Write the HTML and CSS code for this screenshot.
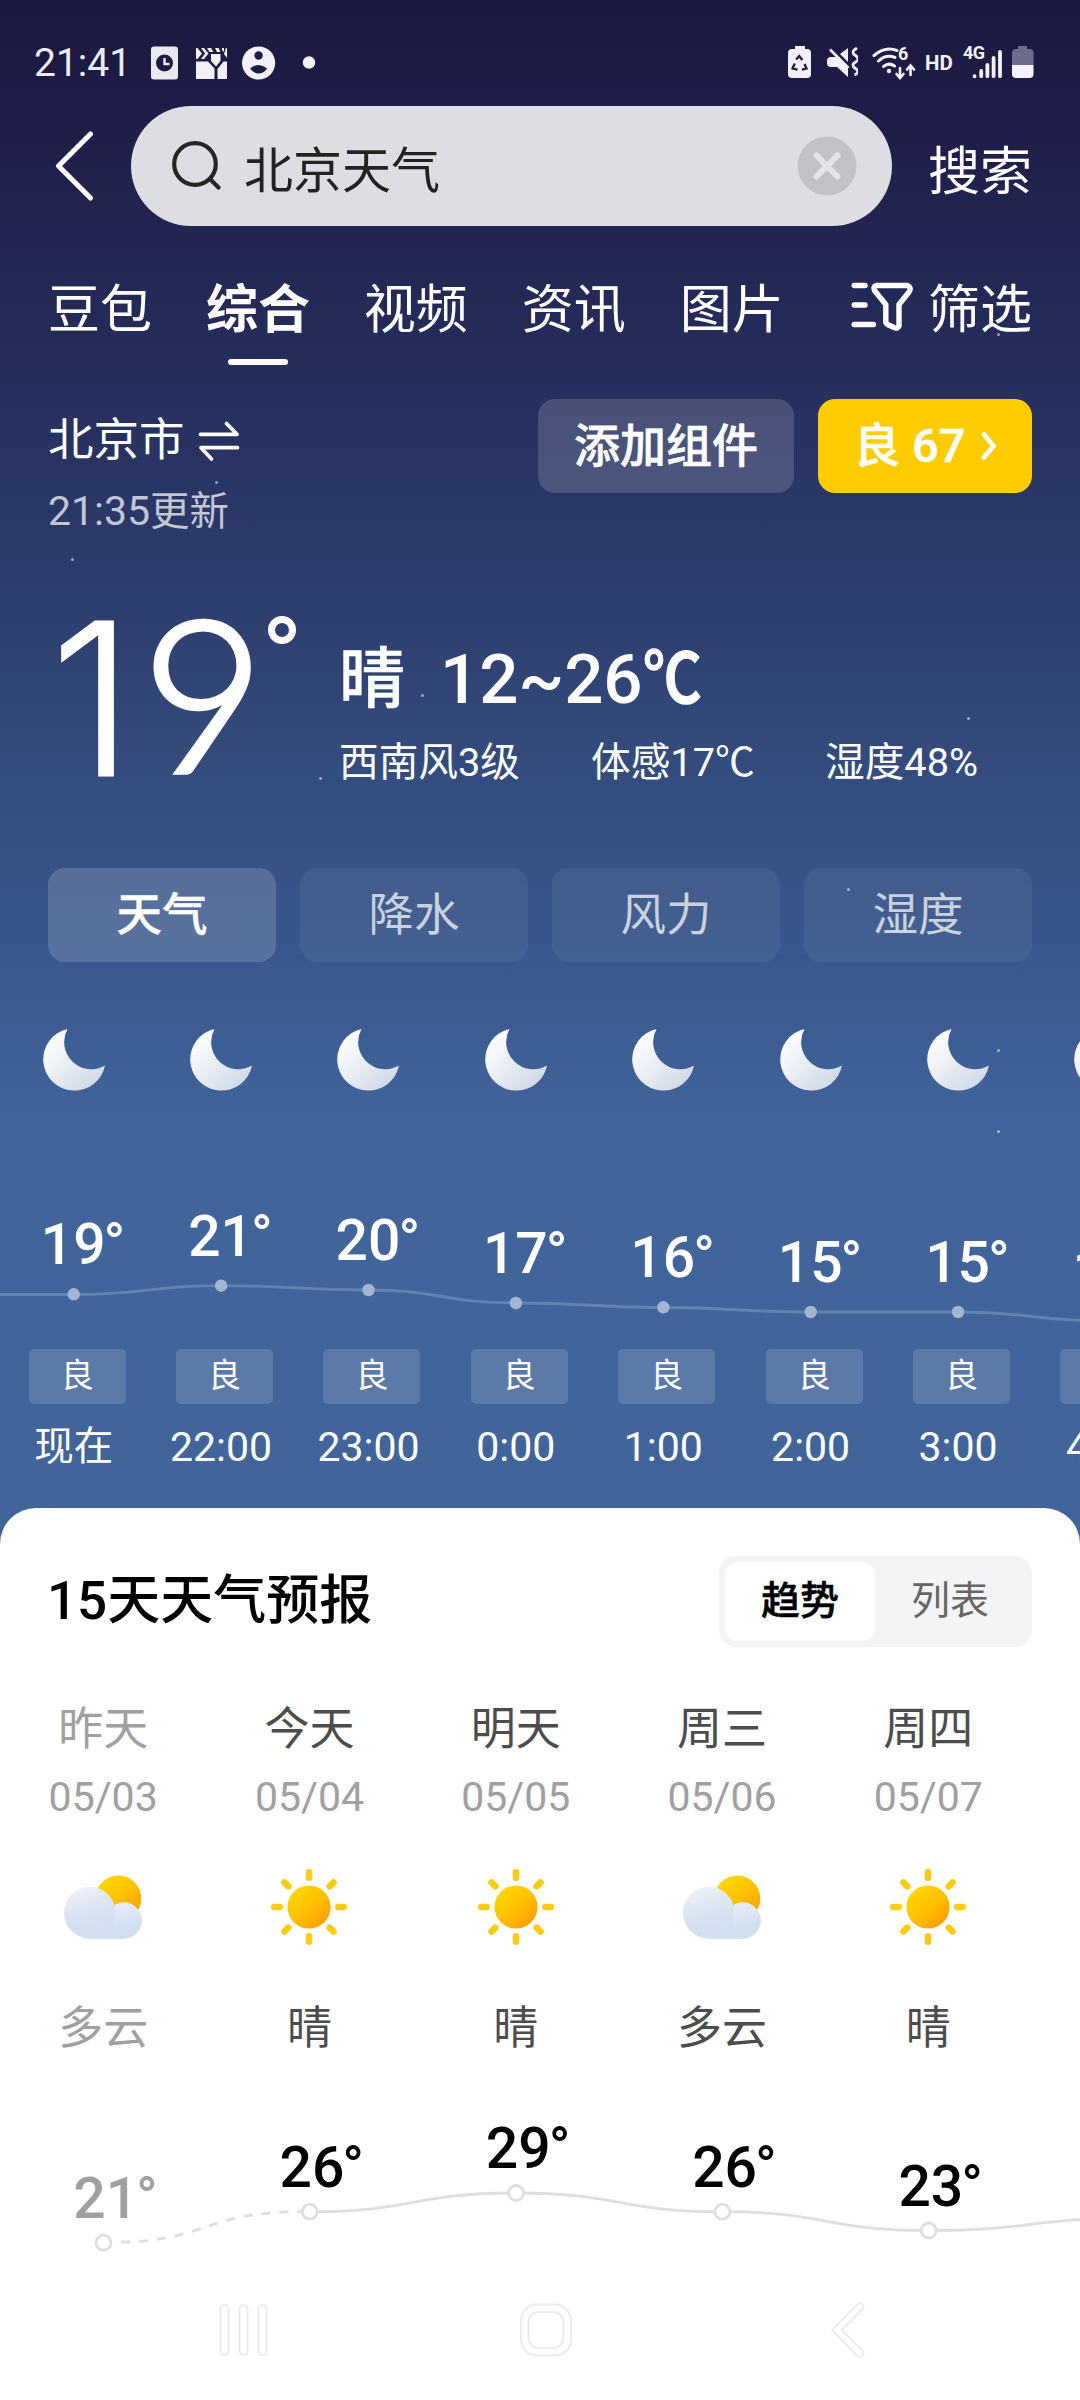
FILE: index.html
```html
<!DOCTYPE html>
<html lang="zh-CN">
<head>
<meta charset="utf-8">
<title>北京天气</title>
<link rel="stylesheet" href="styles.css">
</head>
<body>
<svg class="defs" width="0" height="0" aria-hidden="true">
  <defs>
    <linearGradient id="moonFill" x1="0.1" y1="0.1" x2="0.9" y2="0.9">
      <stop offset="0" stop-color="#ffffff"/>
      <stop offset="1" stop-color="#cfd8e6"/>
    </linearGradient>
    <linearGradient id="sunFill" x1="0.15" y1="0.1" x2="0.85" y2="0.95">
      <stop offset="0" stop-color="#ffd800"/>
      <stop offset="0.5" stop-color="#ffc000"/>
      <stop offset="1" stop-color="#ff9c00"/>
    </linearGradient>
    <linearGradient id="cloudFill" x1="0.2" y1="0" x2="0.5" y2="1">
      <stop offset="0" stop-color="#eef1f9"/>
      <stop offset="0.6" stop-color="#d6e1f1"/>
      <stop offset="1" stop-color="#d2dff0"/>
    </linearGradient>
    <linearGradient id="puffFill" x1="0.3" y1="0" x2="0.5" y2="1">
      <stop offset="0" stop-color="#e9eef7"/>
      <stop offset="0.7" stop-color="#d2dff0"/>
    </linearGradient>
    <symbol id="moon" viewBox="0 0 64 64">
      <path fill="url(#moonFill)" d="M25.5 1 A31.2 31.2 0 1 0 63 37.6 A27.2 27.2 0 0 1 25.5 1Z"/>
    </symbol>
    <symbol id="sun" viewBox="0 0 80 80">
      <g stroke="#fccb12" stroke-width="6.6" stroke-linecap="round">
        <path d="M40 5.3v5.4M40 69.3v5.4M5.3 40h5.4M69.3 40h5.4M15.5 15.5l3.8 3.8M60.7 60.7l3.8 3.8M15.5 64.5l3.8-3.8M60.7 19.3l3.8-3.8"/>
      </g>
      <circle cx="40" cy="40" r="21.6" fill="url(#sunFill)"/>
    </symbol>
    <symbol id="cloudy" viewBox="0 0 80 80">
      <circle cx="55.3" cy="31.5" r="23" fill="url(#sunFill)"/>
      <path fill="url(#cloudFill)" d="M27 19.7a26 26 0 0 0 0 52H60V45a18 18 0 0 0-7.5-1.5A26 26 0 0 0 27 19.7Z"/>
      <path fill="url(#puffFill)" d="M50 71.7h11a18.2 18.2 0 1 0-9-34.2Z"/>
    </symbol>
  </defs>
</svg>

<main class="screen">
  <div class="stars" aria-hidden="true">
    <i style="left:215px;top:481px"></i><i style="left:71px;top:558px"></i><i style="left:997px;top:333px"></i>
    <i style="left:421px;top:694px"></i><i style="left:319px;top:777px"></i><i style="left:967px;top:717px"></i>
    <i style="left:847px;top:888px"></i><i style="left:997px;top:1049px"></i><i style="left:997px;top:1130px"></i>
  </div>

  <header class="status">
    <span class="clock">21:41</span>
    <svg class="status-left" width="166" height="36" viewBox="0 0 166 36">
      <rect x="1" y="1.500" width="27" height="33" rx="3" fill="#e9e9f2"/>
      <circle cx="14.500" cy="18" r="8.500" fill="#1e1b46"/>
      <path d="M14.500 13v6h5" fill="none" stroke="#e9e9f2" stroke-width="2.400"/>
      <g fill="#f1f1f7">
        <path d="M46 3h1.500l4.500 5.500-4.500 5.500H46ZM51 3h3l4.500 5.500L54 14h-3l4-5.500ZM57 3h4l2.500 4h-4ZM65 3h3.500l2 4H67ZM72 3h2v4l-2-2ZM76 3h1v10l-3-4Z"/>
        <path d="M61 9h9.500v7L66 21.500 61 16ZM46 16.500h12l6.500 7V34H46ZM77 16.500V34h-9.500V24l6-7.500Z"/>
        <circle cx="108.600" cy="18" r="16.600"/>
        <circle cx="159" cy="17.500" r="6.200"/>
      </g>
      <circle cx="108.600" cy="10.500" r="4.200" fill="#1e1b46"/>
      <path d="M100 23.500q8.600-7 17.200 0-3.500 5-8.600 5t-8.600-5Z" fill="#1e1b46"/>
    </svg>
    <div class="status-right">
      <svg class="ico-saver" width="23" height="34" viewBox="0 0 23 34">
        <path fill="#f1f1f7" d="M7 1h10v3h2q4 0 4 4v21q0 4-4 4H4q-4 0-4-4V8q0-4 4-4h3Z"/>
        <path d="M8.200 14.500 11.200 11l3.200 4M16.500 19l2 4.500-4.500 1.200M9.500 24.700 4.500 23.500 6.800 18.500" fill="none" stroke="#1e1b46" stroke-width="2.300"/>
      </svg>
      <svg class="ico-mute" width="31" height="30" viewBox="0 0 31 30">
        <path fill="#f1f1f7" d="M0 14q0-4 4-4l5 0L21 21v9L10 20H4q-4 0-4-4ZM13 7l8-6v14Z"/>
        <path d="M3 2.500 21.500 21" stroke="#f1f1f7" stroke-width="2.600"/>
        <path d="M28.500 2q-5 3 0 6.500t0 6.500 0 6.500-1 6.500M28.500 2l1.500-1" fill="none" stroke="#f1f1f7" stroke-width="2.800"/>
      </svg>
      <div class="ico-wifi">
        <svg width="44" height="33" viewBox="0 0 44 33">
          <g fill="none" stroke="#f1f1f7" stroke-width="3" stroke-linecap="round">
            <path d="M2 8.500Q13 -1 25 3.500M6.500 14Q14 7 23 10.500M11.500 19.500Q17 15 22.500 19"/>
            <path d="M28 21v9M24.500 27l3.500 4 3.500-4M38.500 28v-9M35 22.500l3.500-4 3.500 4" stroke-width="2.600"/>
          </g>
          <circle cx="17" cy="24" r="2.200" fill="#f1f1f7"/>
        </svg>
        <b>6</b>
      </div>
      <span class="hd">HD</span>
      <div class="ico-signal">
        <svg width="39" height="34" viewBox="0 0 39 34">
          <g stroke="#f1f1f7" stroke-width="3.800" stroke-linecap="round">
            <path d="M10.600 31.200v.1M17.200 26v5.200M23.400 20v11.200M29.600 13v18.200M36 7v24.200"/>
          </g>
        </svg>
        <b>4G</b>
      </div>
      <svg class="ico-battery" width="22" height="34" viewBox="0 0 22 34">
        <path fill="#6f6d8c" d="M6 1h9v3h2.500q4 0 4 4v13H0V8q0-4 4-4h2Z"/>
        <path fill="#f4f4f8" d="M0 20h21.500v9q0 4-4 4H4q-4 0-4-4Z"/>
      </svg>
    </div>
  </header>

  <div class="search-row">
    <svg class="back" width="40" height="72" viewBox="0 0 40 72">
      <path d="M35.500 4 3.500 36l32 32" fill="none" stroke="#fff" stroke-width="5" stroke-linecap="round" stroke-linejoin="round"/>
    </svg>
    <div class="search-box">
      <svg width="52" height="52" viewBox="0 0 52 52">
        <g fill="none" stroke="#252525" stroke-width="4.200" stroke-linecap="round">
          <circle cx="24" cy="24" r="20.800"/><path d="M39.500 39.500 47.500 47.500"/>
        </g>
      </svg>
      <span class="query">北京天气</span>
      <svg width="60" height="60" viewBox="0 0 60 60">
        <circle cx="30" cy="30" r="29.500" fill="#c2c3c7"/>
        <path d="M19.500 19.500 40.500 40.500M40.500 19.500 19.500 40.500" stroke="#e4e5e9" stroke-width="6" stroke-linecap="round"/>
      </svg>
    </div>
    <span class="search-btn">搜索</span>
  </div>

  <nav class="tabs">
    <span>豆包</span><span class="on">综合</span><span>视频</span><span>资讯</span><span>图片</span>
    <div class="filter">
      <svg width="62" height="52" viewBox="0 0 62 52">
        <g fill="none" stroke="#fff" stroke-width="5.400" stroke-linecap="round" stroke-linejoin="round">
          <path d="M3.200 5.500H14M3.200 25H14M3.200 44.500H22.500"/>
          <path d="M25 5.500H56.500Q61 7.500 58 12L48 24.500V46Q46.500 49.500 43 47.500L36.500 44.500Q34.800 43.500 34.800 41.500V24.500L23.500 10.500Q22 6.500 25 5.500Z"/>
        </g>
      </svg>
      <span>筛选</span>
    </div>
  </nav>

  <section class="place">
    <div class="place-text">
      <div class="city"><span>北京市</span>
        <svg width="42" height="42" viewBox="0 0 42 42">
          <path d="M2.500 14.300H39L28.500 3.500M39.500 27.700H3L13.500 39" fill="none" stroke="#fff" stroke-width="3.700" stroke-linecap="round" stroke-linejoin="round"/>
        </svg>
      </div>
      <div class="updated"><span>21:35</span>更新</div>
    </div>
    <div class="add">添加组件</div>
    <div class="aqi"><span>良 67</span>
      <svg width="16" height="30" viewBox="0 0 16 30"><path d="M3 3.500 12.500 15 3 26.500" fill="none" stroke="#fff" stroke-width="4.600" stroke-linecap="round"/></svg>
    </div>
  </section>

  <section class="now">
    <div class="temp-now"><span class="d1">1</span><span class="d9">9</span><i class="deg"></i></div>
    <div class="now-info">
      <div class="range"><span class="sky">晴</span><span class="span-temp">12~26</span><span class="unit">℃</span></div>
      <div class="facts"><span>西南风3级</span><span>体感17℃</span><span>湿度48%</span></div>
    </div>
  </section>

  <div class="modes"><span class="on">天气</span><span>降水</span><span>风力</span><span>湿度</span></div>

  <section class="hours">
    <svg class="curve" width="1080" height="60" viewBox="0 1275 1080 60">
      <path d="M0 1294.500H73.700C147.400 1294.500 147.400 1285.700 221.100 1285.700S294.800 1290 368.500 1290 442.200 1303 515.900 1303 589.600 1307.500 663.300 1307.500 737 1312 810.700 1312H958.100C1031.800 1312 1031.800 1321 1105.500 1321" fill="none" stroke="#6283b3" stroke-width="2.800"/>
      <g fill="#a3b5d2">
        <circle cx="73.700" cy="1294.300" r="6.200"/><circle cx="221.100" cy="1285.700" r="6.200"/><circle cx="368.500" cy="1290" r="6.200"/>
        <circle cx="515.900" cy="1303" r="6.200"/><circle cx="663.300" cy="1307.300" r="6.200"/><circle cx="810.700" cy="1312" r="6.200"/><circle cx="958.100" cy="1312" r="6.200"/>
      </g>
    </svg>
    <div class="hour"><svg class="moon"><use href="#moon"/></svg><div class="plot"><b style="margin-top:124px">19<i>°</i></b></div><em>良</em><span class="zh">现在</span></div>
    <div class="hour"><svg class="moon"><use href="#moon"/></svg><div class="plot"><b style="margin-top:116px">21<i>°</i></b></div><em>良</em><span>22:00</span></div>
    <div class="hour"><svg class="moon"><use href="#moon"/></svg><div class="plot"><b style="margin-top:120px">20<i>°</i></b></div><em>良</em><span>23:00</span></div>
    <div class="hour"><svg class="moon"><use href="#moon"/></svg><div class="plot"><b style="margin-top:133px">17<i>°</i></b></div><em>良</em><span>0:00</span></div>
    <div class="hour"><svg class="moon"><use href="#moon"/></svg><div class="plot"><b style="margin-top:137px">16<i>°</i></b></div><em>良</em><span>1:00</span></div>
    <div class="hour"><svg class="moon"><use href="#moon"/></svg><div class="plot"><b style="margin-top:142px">15<i>°</i></b></div><em>良</em><span>2:00</span></div>
    <div class="hour"><svg class="moon"><use href="#moon"/></svg><div class="plot"><b style="margin-top:142px">15<i>°</i></b></div><em>良</em><span>3:00</span></div>
    <div class="hour"><svg class="moon"><use href="#moon"/></svg><div class="plot"><b style="margin-top:151px">13<i>°</i></b></div><em>良</em><span>4:00</span></div>
  </section>

  <section class="card">
    <div class="card-head">
      <h2>15天天气预报</h2>
      <div class="toggle"><span class="on">趋势</span><span>列表</span></div>
    </div>
    <div class="days">
      <svg class="curve" width="1080" height="80" viewBox="0 2180 1080 80">
        <g fill="none" stroke="#dedee1" stroke-width="2.800">
          <path stroke-dasharray="9 9" d="M121 2242C206 2241 206 2211.700 301 2211.700"/>
          <path d="M309.800 2211.700C413 2211.700 413 2193 516.100 2193S619.200 2211.700 722.400 2211.700 825.600 2230.500 928.700 2230.500 1031.900 2218 1135 2218"/>
        </g>
        <g fill="#fff" stroke="#dedee1" stroke-width="2.800">
          <circle cx="103.500" cy="2242.700" r="7.500"/><circle cx="309.800" cy="2211.700" r="7.500"/><circle cx="516.100" cy="2193" r="7.500"/><circle cx="722.400" cy="2211.700" r="7.500"/><circle cx="928.700" cy="2230.500" r="7.500"/>
        </g>
      </svg>
      <div class="day past"><span class="name">昨天</span><span class="date">05/03</span><svg class="wx"><use href="#cloudy"/></svg><span class="name">多云</span><div class="plot"><b style="margin-top:113px">21<i>°</i></b></div></div>
      <div class="day"><span class="name">今天</span><span class="date">05/04</span><svg class="wx"><use href="#sun"/></svg><span class="name">晴</span><div class="plot"><b style="margin-top:82px">26<i>°</i></b></div></div>
      <div class="day"><span class="name">明天</span><span class="date">05/05</span><svg class="wx"><use href="#sun"/></svg><span class="name">晴</span><div class="plot"><b style="margin-top:63px">29<i>°</i></b></div></div>
      <div class="day"><span class="name">周三</span><span class="date">05/06</span><svg class="wx"><use href="#cloudy"/></svg><span class="name">多云</span><div class="plot"><b style="margin-top:82px">26<i>°</i></b></div></div>
      <div class="day"><span class="name">周四</span><span class="date">05/07</span><svg class="wx"><use href="#sun"/></svg><span class="name">晴</span><div class="plot"><b style="margin-top:101px">23<i>°</i></b></div></div>
    </div>
    <footer class="sysnav">
      <svg width="50" height="56" viewBox="0 0 50 56">
        <g fill="none" stroke="#ececec" stroke-width="2">
          <rect x="1.500" y="3" width="8" height="50" rx="4"/><rect x="20.500" y="3" width="8" height="50" rx="4"/><rect x="39.500" y="3" width="8" height="50" rx="4"/>
        </g>
      </svg>
      <svg width="52" height="56" viewBox="0 0 52 56">
        <g fill="none" stroke="#ececec" stroke-width="2">
          <rect x="1" y="2.500" width="50" height="51" rx="16"/><rect x="8.500" y="10" width="35" height="36" rx="10"/>
        </g>
      </svg>
      <svg width="36" height="56" viewBox="0 0 36 56">
        <path d="M29 4.500 6 28l23 23.500" fill="none" stroke="#ececec" stroke-width="9" stroke-linecap="round"/>
        <path d="M29 4.500 6 28l23 23.500" fill="none" stroke="#fff" stroke-width="5" stroke-linecap="round"/>
      </svg>
    </footer>
  </section>
</main>
</body>
</html>
```

FILE: styles.css
```css
* { box-sizing: border-box; }
body {
  margin: 0;
  font-family: Roboto, "Noto Sans CJK SC", sans-serif;
  color: #fff;
}
i, em { font-style: normal; }
svg { display: block; flex: none; }
.defs { position: absolute; }

.screen {
  position: relative;
  width: 1080px;
  height: 2400px;
  overflow: hidden;
  display: flex;
  flex-direction: column;
  background: linear-gradient(#1b183f 0, #1f1d48 120px, #232653 250px, #2c3b6b 570px, #354e7f 790px, #3a598f 980px, #406399 1110px, #41659a 1130px);
}
.stars i {
  position: absolute;
  width: 3px;
  height: 3px;
  border-radius: 50%;
  background: rgba(255, 255, 255, .55);
}

/* status bar */
.status {
  height: 106px;
  padding: 0 46px 0 34px;
  display: flex;
  align-items: flex-start;
}
.clock { width: 116px; font-size: 39px; line-height: 46px; margin-top: 40px; color: #ededf4; }
.status-left { margin-top: 45px; }
.status-right { margin: 45px 0 0 auto; display: flex; align-items: flex-start; }
.status-right b { position: absolute; font-weight: 700; line-height: 20px; color: #f1f1f7; }
.ico-mute { margin: 2px 0 0 16px; }
.ico-wifi { position: relative; margin: 2px 0 0 14px; }
.ico-wifi b { left: 26px; top: -3px; font-size: 18px; }
.hd { margin: 6px 0 0 9px; width: 30px; font-size: 20.500px; line-height: 24px; font-weight: 700; color: #f1f1f7; }
.ico-signal { position: relative; margin-left: 9px; }
.ico-signal b { left: -1px; top: -2px; font-size: 18px; letter-spacing: -.5px; }
.ico-battery { margin-left: 9px; }

/* search */
.search-row { height: 120px; display: flex; align-items: center; padding-left: 55px; }
.search-box {
  margin-left: 36px;
  width: 761px;
  height: 120px;
  border-radius: 60px;
  background: #dddee3;
  display: flex;
  align-items: center;
  padding: 0 35px 0 40px;
}
.query { margin-left: 21px; flex: 1; font-size: 49px; line-height: 60px; color: #222; padding-top: 11px; }
.search-btn { margin-left: 36px; padding-top: 14px; font-size: 52px; line-height: 60px; }

/* channel tabs */
.tabs { height: 173px; padding: 54px 48px 0 48px; display: flex; gap: 53.900px; align-items: flex-start; font-size: 52px; line-height: 62px; }
.tabs .on { font-weight: 700; }
.tabs .on::after { content: ""; display: block; width: 60px; height: 6px; border-radius: 3px; background: #fff; margin: 17px auto 0; }
.filter { margin-left: auto; display: flex; gap: 15px; }

/* place */
.place { height: 194px; display: flex; padding: 0 48px; align-items: flex-start; }
.place-text { flex: 1; }
.city { display: flex; align-items: center; gap: 13px; font-size: 45.500px; line-height: 56px; margin-top: 14px; }
.updated { font-size: 39.500px; line-height: 50px; margin-top: 17px; color: rgba(255, 255, 255, .72); }
.updated span { font-size: 41px; }
.add, .aqi { height: 94px; line-height: 94px; border-radius: 17px; display: flex; align-items: center; justify-content: center; font-weight: 500; }
.add { width: 256px; background: rgba(255, 255, 255, .16); font-size: 46px; -webkit-text-stroke: .6px #fff; }
.aqi { width: 214px; margin-left: 24px; background: #fc0; font-size: 47px; gap: 15px; -webkit-text-stroke: .5px #fff; }

/* current conditions */
.now { height: 275px; display: flex; padding-left: 48px; }
.temp-now { position: relative; width: 291px; height: 210px; display: flex; }
.d1 { font: 300 213px/213px Inter, Roboto, sans-serif; width: 92px; margin: -1px 0 0 2px; -webkit-text-stroke: 1px #fff; }
.d9 { font: 300 211px/212px Lato, sans-serif; margin-top: -7px; -webkit-text-stroke: 4.500px #fff; }
.deg { position: absolute; left: 220px; top: 23px; width: 28px; height: 28px; border: 7px solid #fff; border-radius: 50%; }
.range { display: flex; margin-top: 42px; height: 90px; line-height: 90px; align-items: center; font-weight: 500; }
.sky { font-size: 66px; width: 101px; -webkit-text-stroke: .5px #fff; }
.span-temp { font-size: 69px; }
.unit { font-size: 69px; transform: scaleX(.85); transform-origin: 0 50%; -webkit-text-stroke: 1.600px #fff; }
.facts { display: flex; font-size: 39.700px; line-height: 50px; margin-top: 13px; }
.facts span:nth-child(1) { width: 252px; }
.facts span:nth-child(2) { width: 234px; }

/* mode chips */
.modes { height: 94px; display: grid; grid-template-columns: repeat(4, 228px); gap: 24px; padding: 0 48px; }
.modes span {
  height: 94px;
  border-radius: 17px;
  text-align: center;
  line-height: 96px;
  font-size: 45.500px;
  background: rgba(255, 255, 255, .055);
  color: rgba(255, 255, 255, .72);
}
.modes .on { background: rgba(255, 255, 255, .16); color: #fff; font-weight: 500; -webkit-text-stroke: .5px #fff; }

/* hourly strip */
.hours { position: relative; height: 546px; display: grid; grid-template-columns: repeat(8, 147.400px); padding-top: 66px; }
.hours .curve { position: absolute; left: 0; top: 313px; }
.hour { display: flex; flex-direction: column; align-items: center; }
.moon { width: 64px; height: 64px; }
.plot { display: flex; flex-direction: column; }
.plot b { position: relative; font-size: 57px; line-height: 57px; font-weight: 500; }
.plot b i { position: absolute; left: 100%; top: 0; margin-left: -2px; }
.hour .plot { height: 257px; margin-right: 1px; }
.hour em { width: 97px; height: 55px; border-radius: 5px; background: rgba(255, 255, 255, .14); margin-left: 7px; font-size: 33px; line-height: 53px; text-align: center; }
.hour span { font-size: 41px; line-height: 50px; margin-top: 18px; }
.hour .zh { font-size: 39.500px; }

/* forecast card */
.card { height: 892px; background: #fff; border-radius: 36px 36px 0 0; color: #000; display: flex; flex-direction: column; }
.card-head { height: 187px; padding: 48px 48px 0 47px; display: flex; justify-content: space-between; }
h2 { margin: 0; font-size: 53px; line-height: 90px; font-weight: 500; }
.toggle { width: 313px; height: 91px; border-radius: 17px; background: #f3f4f6; padding: 6px; display: flex; }
.toggle span { width: 150px; height: 79px; border-radius: 13px; font-size: 39px; line-height: 78px; text-align: center; color: #666; }
.toggle .on { background: #fff; color: #000; font-weight: 500; -webkit-text-stroke: .5px #000; }
.days { position: relative; display: grid; grid-template-columns: repeat(5, 206.300px); height: 589px; }
.days .curve { position: absolute; left: 0; top: 485px; }
.day { display: flex; flex-direction: column; align-items: center; }
.name { font-size: 45px; line-height: 56px; margin-top: 7px; color: #4c4c4c; }
.date { font-size: 41px; line-height: 50px; margin-top: 14px; color: #a0a0a2; }
.wx { width: 80px; height: 80px; margin: 45px 0 47px; }
.day .plot { margin-left: 5px; }
.past .name, .past b { color: #a0a0a2; }

/* system navigation */
.sysnav { display: flex; padding: 18px 0 0 219px; }
.sysnav svg:nth-child(2) { margin-left: 251px; }
.sysnav svg:nth-child(3) { margin-left: 259px; }
```
